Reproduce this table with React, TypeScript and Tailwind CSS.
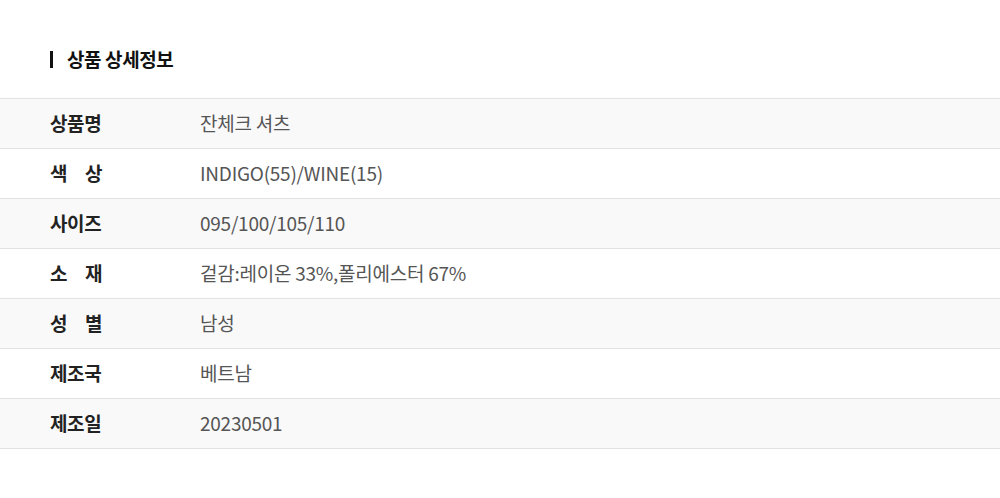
import React from 'react';

const rows: { label: string[]; value: string }[] = [
  { label: ['상품명'], value: '잔체크 셔츠' },
  { label: ['색', '상'], value: 'INDIGO(55)/WINE(15)' },
  { label: ['사이즈'], value: '095/100/105/110' },
  { label: ['소', '재'], value: '겉감:레이온 33%,폴리에스터 67%' },
  { label: ['성', '별'], value: '남성' },
  { label: ['제조국'], value: '베트남' },
  { label: ['제조일'], value: '20230501' },
];

export default function App() {
  return (
    <div
      className="w-[1000px] h-[498px] bg-white"
      style={{ fontFamily: '"Noto Sans CJK KR", "Noto Sans", sans-serif' }}
    >
      {/* Title */}
      <div className="flex items-center h-[98px] pl-[50px] pt-[20px]">
        <span className="w-[3px] h-[17px] bg-[#111] mr-[14px]" />
        <h2 className="text-[19px] font-bold text-[#111] tracking-[-0.4px]">상품 상세정보</h2>
      </div>

      {/* Table */}
      <div className="border-t border-[#e2e2e2]">
        {rows.map((row, i) => (
          <div
            key={i}
            className={`flex items-center h-[50px] pb-[1px] border-b border-[#e2e2e2] ${i % 2 === 0 ? 'bg-[#f9f9f9]' : 'bg-white'}`}
          >
            <div className="w-[200px] pl-[50px]">
              <div className="flex justify-between w-[52px] text-[19px] font-bold text-[#222] tracking-[-0.4px]">
                {row.label.map((t, j) => (
                  <span key={j}>{t}</span>
                ))}
              </div>
            </div>
            <div className="text-[19px] text-[#555] tracking-[-0.25px]">{row.value}</div>
          </div>
        ))}
      </div>
    </div>
  );
}
